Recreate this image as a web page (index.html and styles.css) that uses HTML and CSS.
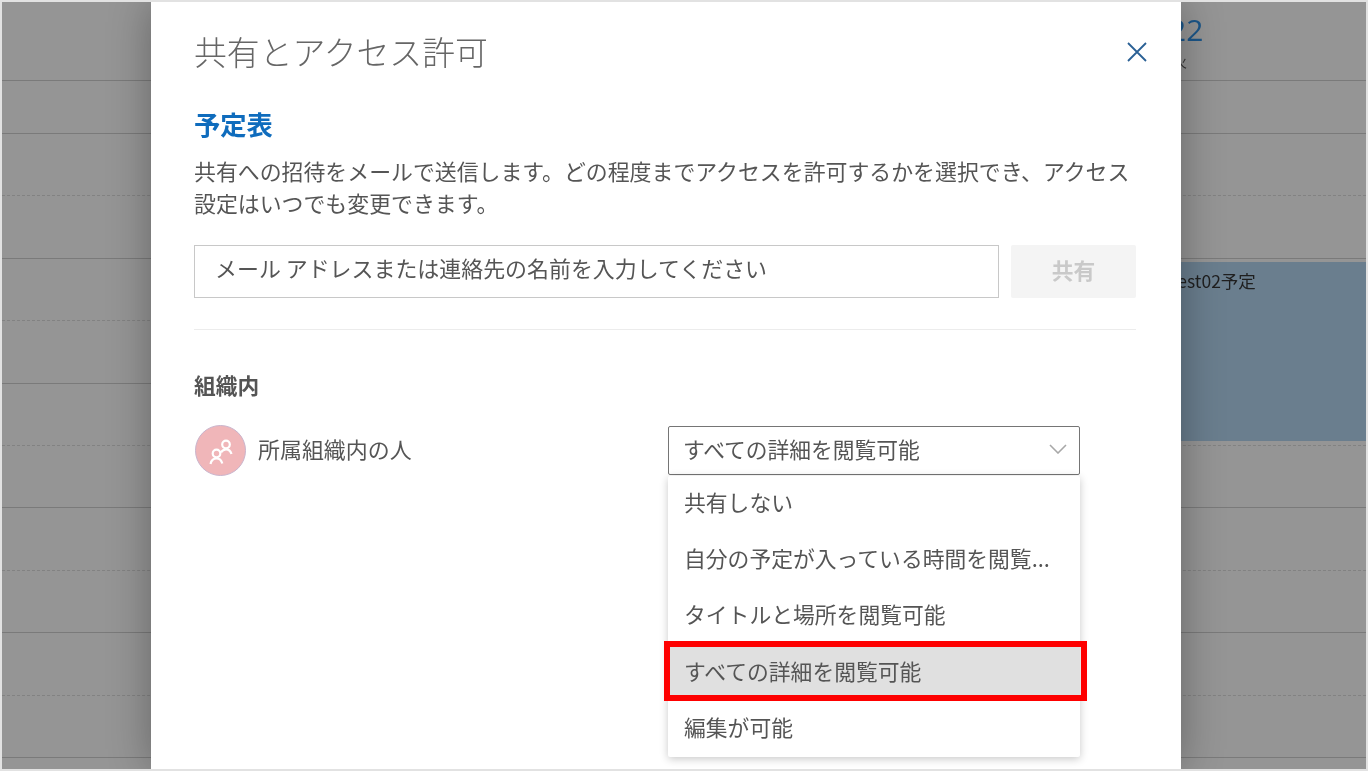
FILE: index.html
```html
<!DOCTYPE html>
<html lang="ja">
<head>
<meta charset="utf-8">
<title>共有とアクセス許可</title>
<link rel="stylesheet" href="styles.css">
</head>
<body>
<div class="frame">
  <div class="calendar">
    <div class="cal-head">
      <div class="cal-date">
        <div class="date-num">22</div>
        <div class="date-day">火</div>
      </div>
    </div>
    <div class="cal-allday"></div>
    <div class="cal-row"></div>
    <div class="cal-row"></div>
    <div class="cal-row"></div>
    <div class="cal-row"></div>
    <div class="cal-row"></div>
    <div class="cal-row"></div>
    <div class="cal-row"></div>
    <div class="cal-row"></div>
    <div class="cal-row"></div>
    <div class="cal-row"></div>
    <div class="event">test02予定</div>
  </div>

  <section class="modal">
    <header class="modal-head">
      <h1 class="modal-title">共有とアクセス許可</h1>
      <svg class="close" viewBox="0 0 20 20" width="20" height="20" aria-hidden="true"><path d="M1 1 19 19M19 1 1 19"/></svg>
    </header>
    <h2 class="cal-name">予定表</h2>
    <p class="desc">共有への招待をメールで送信します。どの程度までアクセスを許可するかを選択でき、アクセス設定はいつでも変更できます。</p>
    <div class="invite">
      <div class="invite-input">メール アドレスまたは連絡先の名前を入力してください</div>
      <div class="share-btn">共有</div>
    </div>
    <hr class="divider">
    <h3 class="group">組織内</h3>
    <div class="person">
      <div class="person-info">
        <div class="avatar">
          <svg viewBox="0 0 50 50" width="50" height="50" aria-hidden="true">
            <circle cx="30" cy="18.500" r="3.800"/>
            <path d="M25 26.500c1.500-2.500 3-3.200 5-3.200 2.800 0 4.600 1.700 5.500 4.700"/>
            <circle cx="20.500" cy="27.500" r="3.800"/>
            <path d="M14.500 38c.7-3.600 2.900-5.700 6-5.700 3 0 5 2 5.800 5.200"/>
          </svg>
        </div>
        <span class="person-name">所属組織内の人</span>
      </div>
      <div class="picker">
        <div class="select">
          <span>すべての詳細を閲覧可能</span>
          <svg class="chevron" viewBox="0 0 18 10" width="18" height="10" aria-hidden="true"><path d="M1 1 9 9 17 1"/></svg>
        </div>
        <ul class="menu">
          <li class="menu-item">共有しない</li>
          <li class="menu-item">自分の予定が入っている時間を閲覧...</li>
          <li class="menu-item">タイトルと場所を閲覧可能</li>
          <li class="menu-item selected">すべての詳細を閲覧可能</li>
          <li class="menu-item">編集が可能</li>
        </ul>
      </div>
    </div>
  </section>
</div>
</body>
</html>
```
FILE: styles.css
```css
* { box-sizing: border-box; }

html, body {
  margin: 0;
  padding: 0;
  height: 771px;
  overflow: hidden;
  background: #e4e4e4;
}

body {
  font-family: "Noto Sans CJK JP", "Noto Sans", sans-serif;
  color: #555;
}

.frame {
  position: relative;
  width: 1368px;
  height: 771px;
  border: 2px solid #e2e2e2;
  overflow: hidden;
  filter: blur(0.4px);
}

.calendar {
  position: relative;
  height: 100%;
  background: #959595;
}

.cal-head {
  height: 79px;
  border-bottom: 1px solid #7a7a7a;
  display: flex;
  justify-content: flex-end;
  padding-right: 163px;
}

.cal-date { width: 34px; padding-top: 10px; }

.date-num {
  font-family: "Open Sans", sans-serif;
  font-size: 30px;
  line-height: 36px;
  color: #1b5689;
}

.date-day {
  margin-top: 3px;
  padding-left: 4px;
  font-size: 14px;
  line-height: 20px;
  color: #333;
}

.cal-allday {
  height: 53px;
  border-bottom: 1px solid #7a7a7a;
}

.cal-row {
  height: 62.4px;
  border-bottom: 1px solid #7a7a7a;
}

.cal-row:nth-child(odd) { border-bottom: 1px dashed #828282; }

.event {
  position: absolute;
  top: 260px;
  left: 1000px;
  right: 0;
  height: 179px;
  padding: 7px 0 0 169px;
  background: #6a7e8e;
  font-size: 17.500px;
  line-height: 24px;
  color: #1f1f1f;
  white-space: nowrap;
  text-align: left;
}

.modal {
  position: absolute;
  top: 0;
  left: 149px;
  bottom: 0;
  width: 1030px;
  padding: 0 45px 0 43px;
  background: #fff;
  box-shadow: 0 0 40px rgba(0, 0, 0, 0.32);
}

.modal-head {
  display: flex;
  align-items: center;
  justify-content: space-between;
  height: 102px;
  padding-bottom: 4px;
}

.modal-title {
  margin: 0;
  font-size: 32.850px;
  font-weight: 300;
  line-height: 48px;
  color: #666;
}

.close {
  margin: 2px -11px 0 0;
  flex: none;
}

.close path {
  fill: none;
  stroke: #2a6095;
  stroke-width: 1.8;
}

.cal-name {
  margin: 0;
  font-size: 26.300px;
  font-weight: 700;
  line-height: 40px;
  color: #0f6cbd;
}

.desc {
  margin: 11px 0 0;
  font-size: 21.900px;
  line-height: 32px;
  color: #555;
}

.invite {
  display: flex;
  gap: 12px;
  margin-top: 26px;
}

.invite-input {
  flex: 1;
  height: 53px;
  padding-left: 20px;
  border: 1.500px solid #c8c8c8;
  font-size: 21.950px;
  line-height: 44px;
  color: #555;
}

.share-btn {
  width: 125px;
  height: 53px;
  border-radius: 2px;
  background: #f4f4f4;
  font-size: 21.700px;
  font-weight: 700;
  line-height: 49px;
  text-align: center;
  color: #c9c9c9;
}

.divider {
  height: 1px;
  margin: 31px 0 0;
  border: 0;
  background: #ececec;
}

.group {
  margin: 39px 0 0;
  font-size: 21.700px;
  font-weight: 700;
  line-height: 32px;
  color: #555;
}

.person {
  display: flex;
  justify-content: space-between;
  padding: 0 56px 0 1px;
  margin-top: 24px;
}

.person-info {
  display: flex;
  align-items: center;
  gap: 12px;
  height: 51px;
}

.avatar {
  width: 51px;
  height: 51px;
  border-radius: 50%;
  background: #f0b6b9;
  border: 1px solid #c9b4cc;
}

.avatar svg { display: block; }

.avatar circle,
.avatar path {
  fill: none;
  stroke: #fff;
  stroke-width: 2.200;
}

.person-name {
  font-size: 21.950px;
  line-height: 46px;
  padding-bottom: 4px;
  color: #555;
}

.picker { width: 412px; padding-top: 1px; }

.select {
  display: flex;
  align-items: center;
  justify-content: space-between;
  height: 49px;
  padding: 0 12px 4px 14px;
  border: 1.500px solid #757575;
  border-radius: 2px;
  font-size: 21.750px;
  color: #555;
}

.chevron path {
  fill: none;
  stroke: #a8a8a8;
  stroke-width: 1.600;
}

.menu {
  list-style: none;
  margin: 1px 0 0;
  padding: 0;
  background: #fff;
  border-radius: 2px;
  box-shadow: 0 2px 8px rgba(0, 0, 0, 0.22);
}

.menu-item {
  position: relative;
  height: 56.200px;
  padding-left: 16px;
  font-size: 21.800px;
  line-height: 51px;
  color: #555;
  white-space: nowrap;
}

.selected { background: #e0e0e0; }

.selected::after {
  content: "";
  position: absolute;
  top: -4px;
  left: -4px;
  right: -7px;
  bottom: 0;
  border: 6px solid #fe0000;
}
```
